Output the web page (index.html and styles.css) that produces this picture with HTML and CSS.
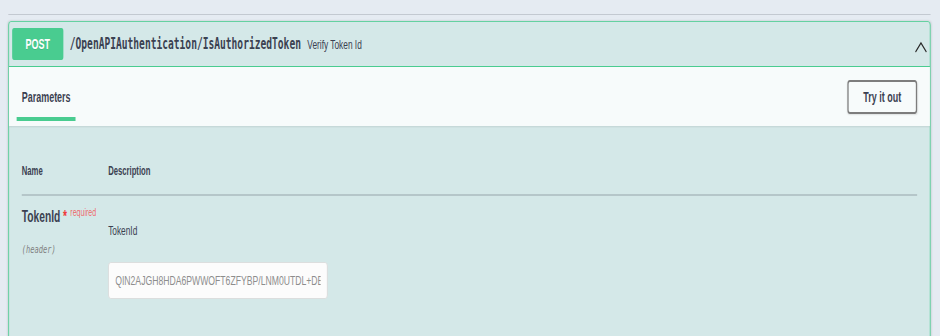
FILE: index.html
```html
<!DOCTYPE html>
<html>
<head>
    <title>Swagger - IsAuthorizedToken</title>
    <link rel="stylesheet" href="styles.css">
</head>
<body>

    <div class="page">
        <div class="wrapper">
            <div class="tag-line"></div>

            <div class="opblock">
                <div class="summary">
                    <span class="method">POST</span>
                    <span class="path">/OpenAPIAuthentication/IsAuthorizedToken</span>
                    <span class="summary-desc">Verify Token Id</span>
                    <svg class="arrow" width="20" height="20" viewBox="0 0 20 20">
                        <polyline points="1.5,17 10,8 18.5,17" fill="none" stroke="#2b2b2b" stroke-width="1.7"/>
                    </svg>
                </div>

                <div class="section-header">
                    <h4 class="tab"><span>Parameters</span></h4>
                    <button class="try-out">Try it out</button>
                </div>

                <div class="table-container">
                    <div class="params-head">
                        <div class="col-name">Name</div>
                        <div class="col-desc">Description</div>
                    </div>
                    <div class="param-row">
                        <div class="col-name">
                            <div class="param-name">TokenId<span class="star">&nbsp;*</span><span class="req">required</span></div>
                            <div class="param-in">(header)</div>
                        </div>
                        <div class="col-desc">
                            <p class="param-desc">TokenId</p>
                            <input class="param-input" type="text" placeholder="QIN2AJGH8HDA6PWWOFT6ZFYBP/LNM0UTDL+DBC0XQ3KZ7">
                        </div>
                    </div>
                </div>
            </div>
        </div>
    </div>

</body>
</html>
```

FILE: styles.css
```css
html {
    overflow: hidden;
}

body {
    margin: 0;
    background: #e5ebf2;
    font-family: 'Liberation Sans', Arial, sans-serif;
    color: #3b4151;
    overflow: hidden;
}

/* the shot is squeezed sideways, so lay out wide and squeeze */
.page {
    width: 1469px;
    transform: scaleX(0.64);
    transform-origin: 0 0;
}

.wrapper {
    padding: 0 15px 0 13px;
}

.tag-line {
    height: 14px;
    border-bottom: 1px solid rgba(59, 65, 81, 0.2);
}

.opblock {
    margin-top: 6px;
    border: 1px solid #49cc90;
    border-radius: 4px;
    background: rgba(73, 204, 144, 0.1);
    box-shadow: 0 0 3px rgba(0, 0, 0, 0.19);
}

.summary {
    display: flex;
    align-items: center;
    padding: 6px 4px 6px 5px;
    border-bottom: 1px solid #49cc90;
}

.method {
    min-width: 80px;
    padding: 6px 0;
    line-height: 20px;
    border-radius: 3px;
    background: #49cc90;
    color: #fff;
    font-size: 14px;
    font-weight: bold;
    text-align: center;
    text-shadow: 0 1px 0 rgba(0, 0, 0, 0.1);
}

.path {
    padding: 0 10px;
    font-family: 'DejaVu Sans Mono', monospace;
    font-size: 15px;
    font-weight: bold;
    color: #3b4151;
}

.summary-desc {
    flex: 1;
    font-size: 13px;
    color: #3b4151;
}

.arrow {
    margin-top: 1px;
}

.section-header {
    display: flex;
    align-items: center;
    min-height: 59px;
    box-sizing: border-box;
    padding: 8px 20px;
    background: rgba(255, 255, 255, 0.8);
    box-shadow: 0 1px 2px rgba(0, 0, 0, 0.1);
}

.tab {
    flex: 1;
    margin: 2px 0 0;
    font-size: 14px;
    line-height: 17px;
}

.tab span {
    position: relative;
}

.tab span::after {
    content: "";
    position: absolute;
    left: -10%;
    bottom: -16px;
    width: 120%;
    height: 4px;
    background: #49cc90;
}

.try-out {
    padding: 7px 23px;
    border: 2px solid #7d7d7d;
    border-radius: 4px;
    background: transparent;
    box-shadow: 0 1px 2px rgba(0, 0, 0, 0.1);
    font-family: 'Liberation Sans', Arial, sans-serif;
    font-size: 14px;
    font-weight: bold;
    line-height: 16px;
    color: #3b4151;
}

.table-container {
    padding: 26px 20px 60px;
}

.params-head {
    display: flex;
    padding: 12px 0 15px;
    border-bottom: 2px solid rgba(59, 65, 81, 0.2);
    font-size: 12px;
    font-weight: bold;
    line-height: 15px;
}

.col-name {
    width: 135px;
}

.col-desc {
    flex: 1;
}

.param-row {
    display: flex;
    padding-top: 11px;
}

.param-name {
    font-size: 16px;
    font-weight: bold;
    line-height: 19px;
}

.star {
    color: #f03b3b;
}

.req {
    position: relative;
    top: -6px;
    padding: 5px;
    font-size: 11px;
    font-weight: normal;
    color: rgba(255, 0, 0, 0.6);
}

.param-in {
    margin-top: 15px;
    font-family: 'DejaVu Sans Mono', monospace;
    font-size: 11px;
    font-style: italic;
    line-height: 14px;
    color: #808080;
}

.param-desc {
    margin: 16px 0 23px;
    font-size: 13px;
    line-height: 16px;
}

.param-input {
    display: block;
    width: 343px;
    box-sizing: border-box;
    padding: 8px 10px;
    border: 1px solid #d9d9d9;
    border-radius: 4px;
    background: #fcfcfc;
    font-family: 'Liberation Sans', Arial, sans-serif;
    font-size: 13.5px;
    line-height: 19px;
}

.param-input::placeholder {
    color: #8d8d8d;
}
```
